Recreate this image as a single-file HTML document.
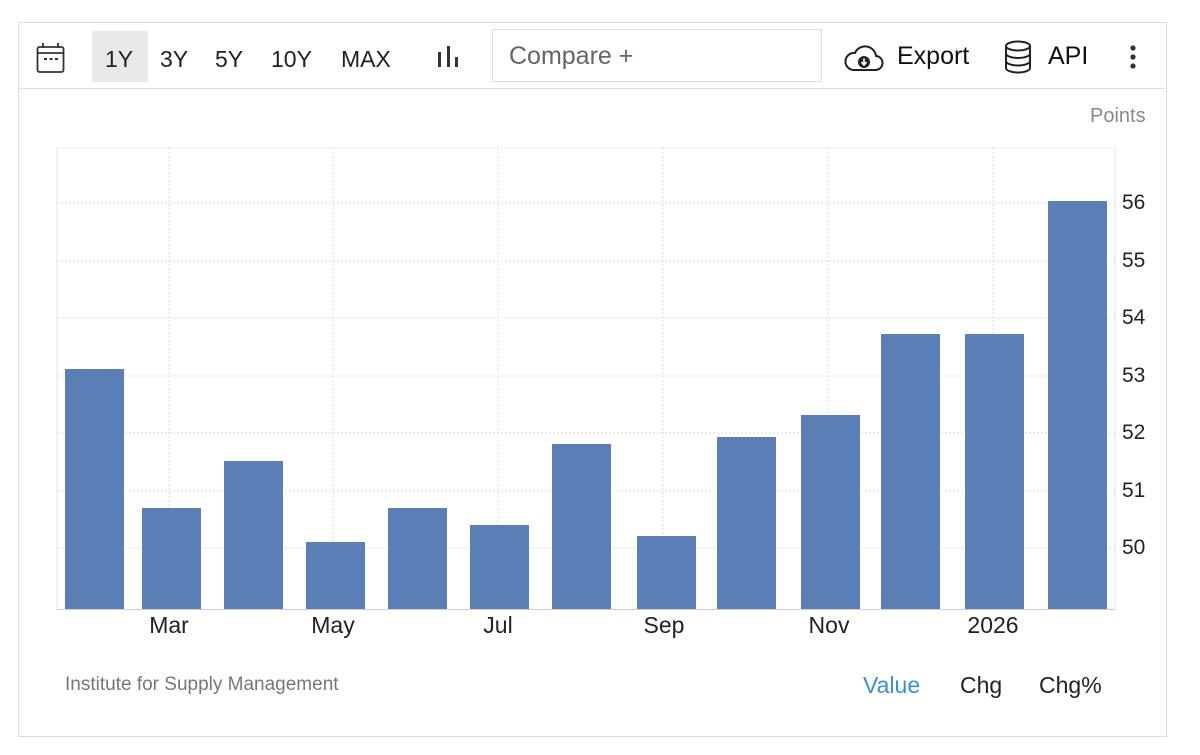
<!DOCTYPE html>
<html><head><style>
body{margin:0;width:1200px;height:755px;background:#fff;font-family:"Liberation Sans",sans-serif;position:relative;overflow:hidden}
.a{position:absolute}
.t{font-size:23px;color:#222;top:46px}
.y{font-size:21px;color:#222;left:1122px}
.m{font-size:23px;color:#222;top:612px;width:100px;text-align:center}
.b{position:absolute;background:#5b80b8;width:59px;bottom:146px}
</style></head><body>
<div class="a" style="left:18px;top:22px;width:1147px;height:713px;border:1px solid #ddd"></div>
<div class="a" style="left:19px;top:88px;width:1146px;height:1px;background:#ddd"></div>
<svg class="a" style="left:36px;top:42px" width="30" height="32" viewBox="0 0 30 32"><rect x="1.5" y="5" width="26" height="25" rx="2" fill="none" stroke="#333" stroke-width="1.8"/><line x1="1.5" y1="11" x2="27.5" y2="11" stroke="#333" stroke-width="1.8"/><line x1="7" y1="1" x2="7" y2="6" stroke="#333" stroke-width="1.8"/><line x1="22" y1="1" x2="22" y2="6" stroke="#333" stroke-width="1.8"/><rect x="8" y="16" width="3" height="2" fill="#333"/><rect x="13.5" y="16" width="3" height="2" fill="#333"/><rect x="19" y="16" width="3" height="2" fill="#333"/></svg>
<div class="a" style="left:92px;top:31px;width:56px;height:51px;background:#e8e8e8"></div>
<div class="a t" style="left:105px">1Y</div>
<div class="a t" style="left:160px">3Y</div>
<div class="a t" style="left:215px">5Y</div>
<div class="a t" style="left:271px">10Y</div>
<div class="a t" style="left:341px">MAX</div>
<svg class="a" style="left:437px;top:46px" width="24" height="22"><rect x="1" y="6" width="3" height="15" fill="#333"/><rect x="10" y="0" width="3" height="21" fill="#333"/><rect x="18" y="11" width="3" height="10" fill="#333"/></svg>
<div class="a" style="left:492px;top:29px;width:328px;height:51px;border:1px solid #ddd"></div>
<div class="a" style="left:509px;top:42px;font-size:25px;color:#666">Compare +</div>
<svg class="a" style="left:844px;top:44px" width="40" height="28" viewBox="0 0 40 28"><path d="M9 26 H31 A7 7 0 0 0 32 12 A11 11 0 0 0 11 9 A8.5 8.5 0 0 0 9 26 Z" fill="none" stroke="#222" stroke-width="2"/><circle cx="20" cy="18" r="6" fill="#222"/><path d="M20 14.5 V20 M17.5 18 L20 21 L22.5 18" stroke="#fff" stroke-width="1.6" fill="none"/></svg>
<div class="a" style="left:897px;top:42px;font-size:25px;color:#111">Export</div>
<svg class="a" style="left:1004px;top:40px" width="28" height="34" viewBox="0 0 28 34"><g fill="none" stroke="#222" stroke-width="2"><ellipse cx="14" cy="6" rx="12" ry="4.5"/><path d="M2 6 V28 A12 4.5 0 0 0 26 28 V6"/><path d="M2 13.5 A12 4.5 0 0 0 26 13.5"/><path d="M2 21 A12 4.5 0 0 0 26 21"/></g></svg>
<div class="a" style="left:1048px;top:42px;font-size:25px;color:#111">API</div>
<svg class="a" style="left:1128px;top:45px" width="10" height="24"><circle cx="5" cy="3" r="2.6" fill="#333"/><circle cx="5" cy="12" r="2.6" fill="#333"/><circle cx="5" cy="21" r="2.6" fill="#333"/></svg>
<div class="a" style="left:1090px;top:105px;font-size:20px;color:#888">Points</div>
<svg class="a" style="left:0;top:0" width="1200" height="755">
<g stroke="#ddd" stroke-width="1" stroke-dasharray="2,2">
<line x1="57" y1="148" x2="1115" y2="148"/>
<line x1="57" y1="203" x2="1115" y2="203"/><line x1="57" y1="261" x2="1115" y2="261"/><line x1="57" y1="318" x2="1115" y2="318"/><line x1="57" y1="376" x2="1115" y2="376"/><line x1="57" y1="433" x2="1115" y2="433"/><line x1="57" y1="491" x2="1115" y2="491"/><line x1="57" y1="548" x2="1115" y2="548"/>
<line x1="169" y1="148" x2="169" y2="609"/><line x1="333" y1="148" x2="333" y2="609"/><line x1="498" y1="148" x2="498" y2="609"/><line x1="663" y1="148" x2="663" y2="609"/><line x1="828" y1="148" x2="828" y2="609"/><line x1="993" y1="148" x2="993" y2="609"/>
</g>
<line x1="57" y1="148" x2="57" y2="609" stroke="#e4e4e4"/>
<line x1="1115" y1="148" x2="1115" y2="609" stroke="#e4e4e4"/>
<line x1="57" y1="609.5" x2="1115" y2="609.5" stroke="#ccc"/>
</svg>
<div class="b" style="left:65px;top:369px"></div>
<div class="b" style="left:142px;top:508px"></div>
<div class="b" style="left:224px;top:461px"></div>
<div class="b" style="left:306px;top:542px"></div>
<div class="b" style="left:388px;top:508px"></div>
<div class="b" style="left:470px;top:525px"></div>
<div class="b" style="left:552px;top:444px"></div>
<div class="b" style="left:637px;top:536px"></div>
<div class="b" style="left:717px;top:437px"></div>
<div class="b" style="left:801px;top:415px"></div>
<div class="b" style="left:881px;top:334px"></div>
<div class="b" style="left:965px;top:334px"></div>
<div class="b" style="left:1048px;top:201px"></div>
<div class="a y" style="top:191px">56</div>
<div class="a y" style="top:249px">55</div>
<div class="a y" style="top:306px">54</div>
<div class="a y" style="top:364px">53</div>
<div class="a y" style="top:421px">52</div>
<div class="a y" style="top:479px">51</div>
<div class="a y" style="top:536px">50</div>
<div class="a m" style="left:119px">Mar</div>
<div class="a m" style="left:283px">May</div>
<div class="a m" style="left:448px">Jul</div>
<div class="a m" style="left:614px">Sep</div>
<div class="a m" style="left:779px">Nov</div>
<div class="a m" style="left:943px">2026</div>
<div class="a" style="left:65px;top:674px;font-size:19px;color:#777">Institute for Supply Management</div>
<div class="a" style="left:863px;top:672px;font-size:23px;color:#3a8ee0">Value</div>
<div class="a" style="left:960px;top:672px;font-size:23px;color:#222">Chg</div>
<div class="a" style="left:1039px;top:672px;font-size:23px;color:#222">Chg%</div>
</body></html>
